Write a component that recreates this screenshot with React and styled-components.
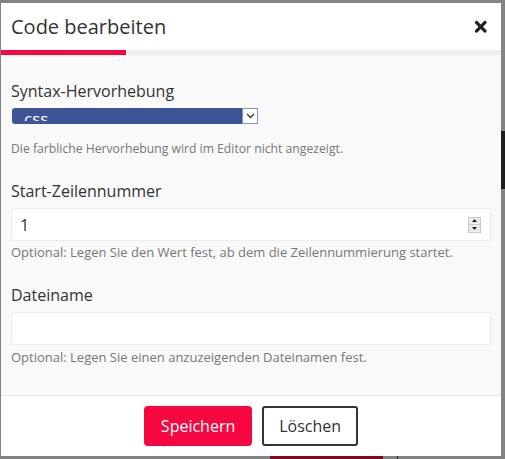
import React from 'react';
import styled, { createGlobalStyle } from 'styled-components';
import { FaTimes } from 'react-icons/fa';

const accent = '#f7073f';

const GlobalStyle = createGlobalStyle`
  html, body {
    margin: 0;
    padding: 0;
    background: #838383;
  }
  body {
    font-family: 'Open Sans', 'Liberation Sans', sans-serif;
    color: #333;
  }
`;

// dimmed page behind the dialog
const Screen = styled.div`
  width: 505px;
  height: 459px;
  display: grid;
  grid-template-columns: 1px 500px 4px;
  grid-template-rows: 3px 453px 3px;
  background: #838383;
  overflow: hidden;
`;

const SideStrip = styled.div`
  grid-column: 3;
  grid-row: 2;
  display: flex;
  flex-direction: column;
  padding-top: 128px;
  .dark {
    height: 58px;
    background: #1e1e1e;
  }
`;

const BottomStrip = styled.div`
  grid-column: 1 / 4;
  grid-row: 3;
  display: flex;
  padding-left: 270px;
  .button {
    width: 113px;
    background: #7c0a22;
  }
  .rule {
    width: 1px;
    margin-left: 14px;
    background: #222;
  }
`;

const Modal = styled.div`
  grid-column: 2;
  grid-row: 2;
  display: flex;
  flex-direction: column;
  background: #fff;
`;

const Header = styled.div`
  height: 47px;
  padding: 0 12px 0 10px;
  display: flex;
  align-items: center;
  justify-content: space-between;
  h2 {
    margin: 0;
    font-size: 20px;
    font-weight: 400;
    line-height: 27px;
    color: #333;
  }
`;

const CloseButton = styled.button`
  border: 0;
  padding: 0;
  background: none;
  display: flex;
  color: #222;
  cursor: pointer;
`;

const Progress = styled.div`
  height: 5px;
  background: #eeeff3;
  div {
    height: 100%;
    background: ${accent};
  }
`;

const Body = styled.div`
  flex: 1;
  background: #f9f9f9;
  border-bottom: 1px solid #e9e9e9;
  padding: 25px 10px 0 10px;
`;

const FormGroup = styled.div`
  margin-bottom: 23px;
`;

const Label = styled.div`
  font-size: 16px;
  line-height: 22px;
  color: #333;
  margin-bottom: 6px;
`;

const Help = styled.div`
  font-size: ${(p) => p.$size || 13}px;
  line-height: 17px;
  color: #777;
  margin-top: ${(p) => p.$offset}px;
`;

const Select = styled.div`
  width: 246px;
  height: 16px;
  margin: 1px 0 0 1px;
  display: flex;
`;

const SelectValue = styled.div`
  flex: 1;
  box-sizing: border-box;
  height: 16px;
  background: #3f5497;
  border: 1px solid #3f5497;
  border-bottom-width: 3px;
  border-radius: 3px 0 0 3px;
  overflow: hidden;
  padding: 2px 0 0 11px;
  color: #fff;
  font-size: 17px;
  line-height: 16px;
`;

const SelectArrow = styled.div`
  width: 16px;
  height: 16px;
  box-sizing: border-box;
  background: #fff;
  border: 1px solid #7895d2;
  display: flex;
  align-items: center;
  justify-content: center;
`;

const Input = styled.div`
  box-sizing: border-box;
  height: 33px;
  background: #fff;
  border: 1px solid #ececec;
  border-radius: 2px;
  padding: 0 9px 0 8px;
  display: flex;
  align-items: center;
  font-size: 16px;
  color: #333;
  span {
    flex: 1;
  }
`;

const Spinner = styled.div`
  width: 13px;
  height: 16px;
  box-sizing: border-box;
  border: 1px solid #c9c9c9;
  background: #ececec;
  display: flex;
  flex-direction: column;
  div {
    flex: 1;
    display: flex;
    align-items: center;
    justify-content: center;
  }
  div + div {
    border-top: 1px solid #c9c9c9;
  }
`;

const Footer = styled.div`
  height: 60px;
  display: flex;
  align-items: center;
  justify-content: center;
  gap: 10px;
`;

const Button = styled.button`
  height: 40px;
  box-sizing: border-box;
  font-family: inherit;
  font-size: 16px;
  cursor: pointer;
  padding: ${(p) => (p.$primary ? '0 17px' : '0 15px')};
  border-radius: ${(p) => (p.$primary ? '4px' : '3px')};
  border: ${(p) => (p.$primary ? '0' : '2px solid #333')};
  background: ${(p) => (p.$primary ? accent : '#fff')};
  color: ${(p) => (p.$primary ? '#fff' : '#333')};
`;

const Chevron = () => (
  <svg width="9" height="6" viewBox="0 0 9 6">
    <path d="M1 1l3.5 3.5L8 1" fill="none" stroke="#333" strokeWidth="1.3" />
  </svg>
);

const Triangle = ({ up }) => (
  <svg width="5" height="3" viewBox="0 0 5 3">
    <path d={up ? 'M0 3h5L2.5 0z' : 'M0 0h5L2.5 3z'} fill="#222" />
  </svg>
);

const App = () => (
  <>
    <GlobalStyle />
    <Screen>
      <Modal>
        <Header>
          <h2>Code bearbeiten</h2>
          <CloseButton aria-label="close">
            <FaTimes size={17.5} />
          </CloseButton>
        </Header>
        <Progress>
          <div style={{ width: '25%' }} />
        </Progress>
        <Body>
          <FormGroup>
            <Label>Syntax-Hervorhebung</Label>
            <Select>
              <SelectValue>css</SelectValue>
              <SelectArrow>
                <Chevron />
              </SelectArrow>
            </Select>
            <Help $offset={16} $size={12.2}>
              Die farbliche Hervorhebung wird im Editor nicht angezeigt.
            </Help>
          </FormGroup>
          <FormGroup>
            <Label>Start-Zeilennummer</Label>
            <Input>
              <span>1</span>
              <Spinner>
                <div>
                  <Triangle up />
                </div>
                <div>
                  <Triangle />
                </div>
              </Spinner>
            </Input>
            <Help $offset={3}>
              Optional: Legen Sie den Wert fest, ab dem die Zeilennummierung
              startet.
            </Help>
          </FormGroup>
          <FormGroup>
            <Label>Dateiname</Label>
            <Input />
            <Help $offset={4}>
              Optional: Legen Sie einen anzuzeigenden Dateinamen fest.
            </Help>
          </FormGroup>
        </Body>
        <Footer>
          <Button $primary>Speichern</Button>
          <Button>Löschen</Button>
        </Footer>
      </Modal>
      <SideStrip>
        <div className="dark" />
      </SideStrip>
      <BottomStrip>
        <div className="button" />
        <div className="rule" />
      </BottomStrip>
    </Screen>
  </>
);

export default App;
